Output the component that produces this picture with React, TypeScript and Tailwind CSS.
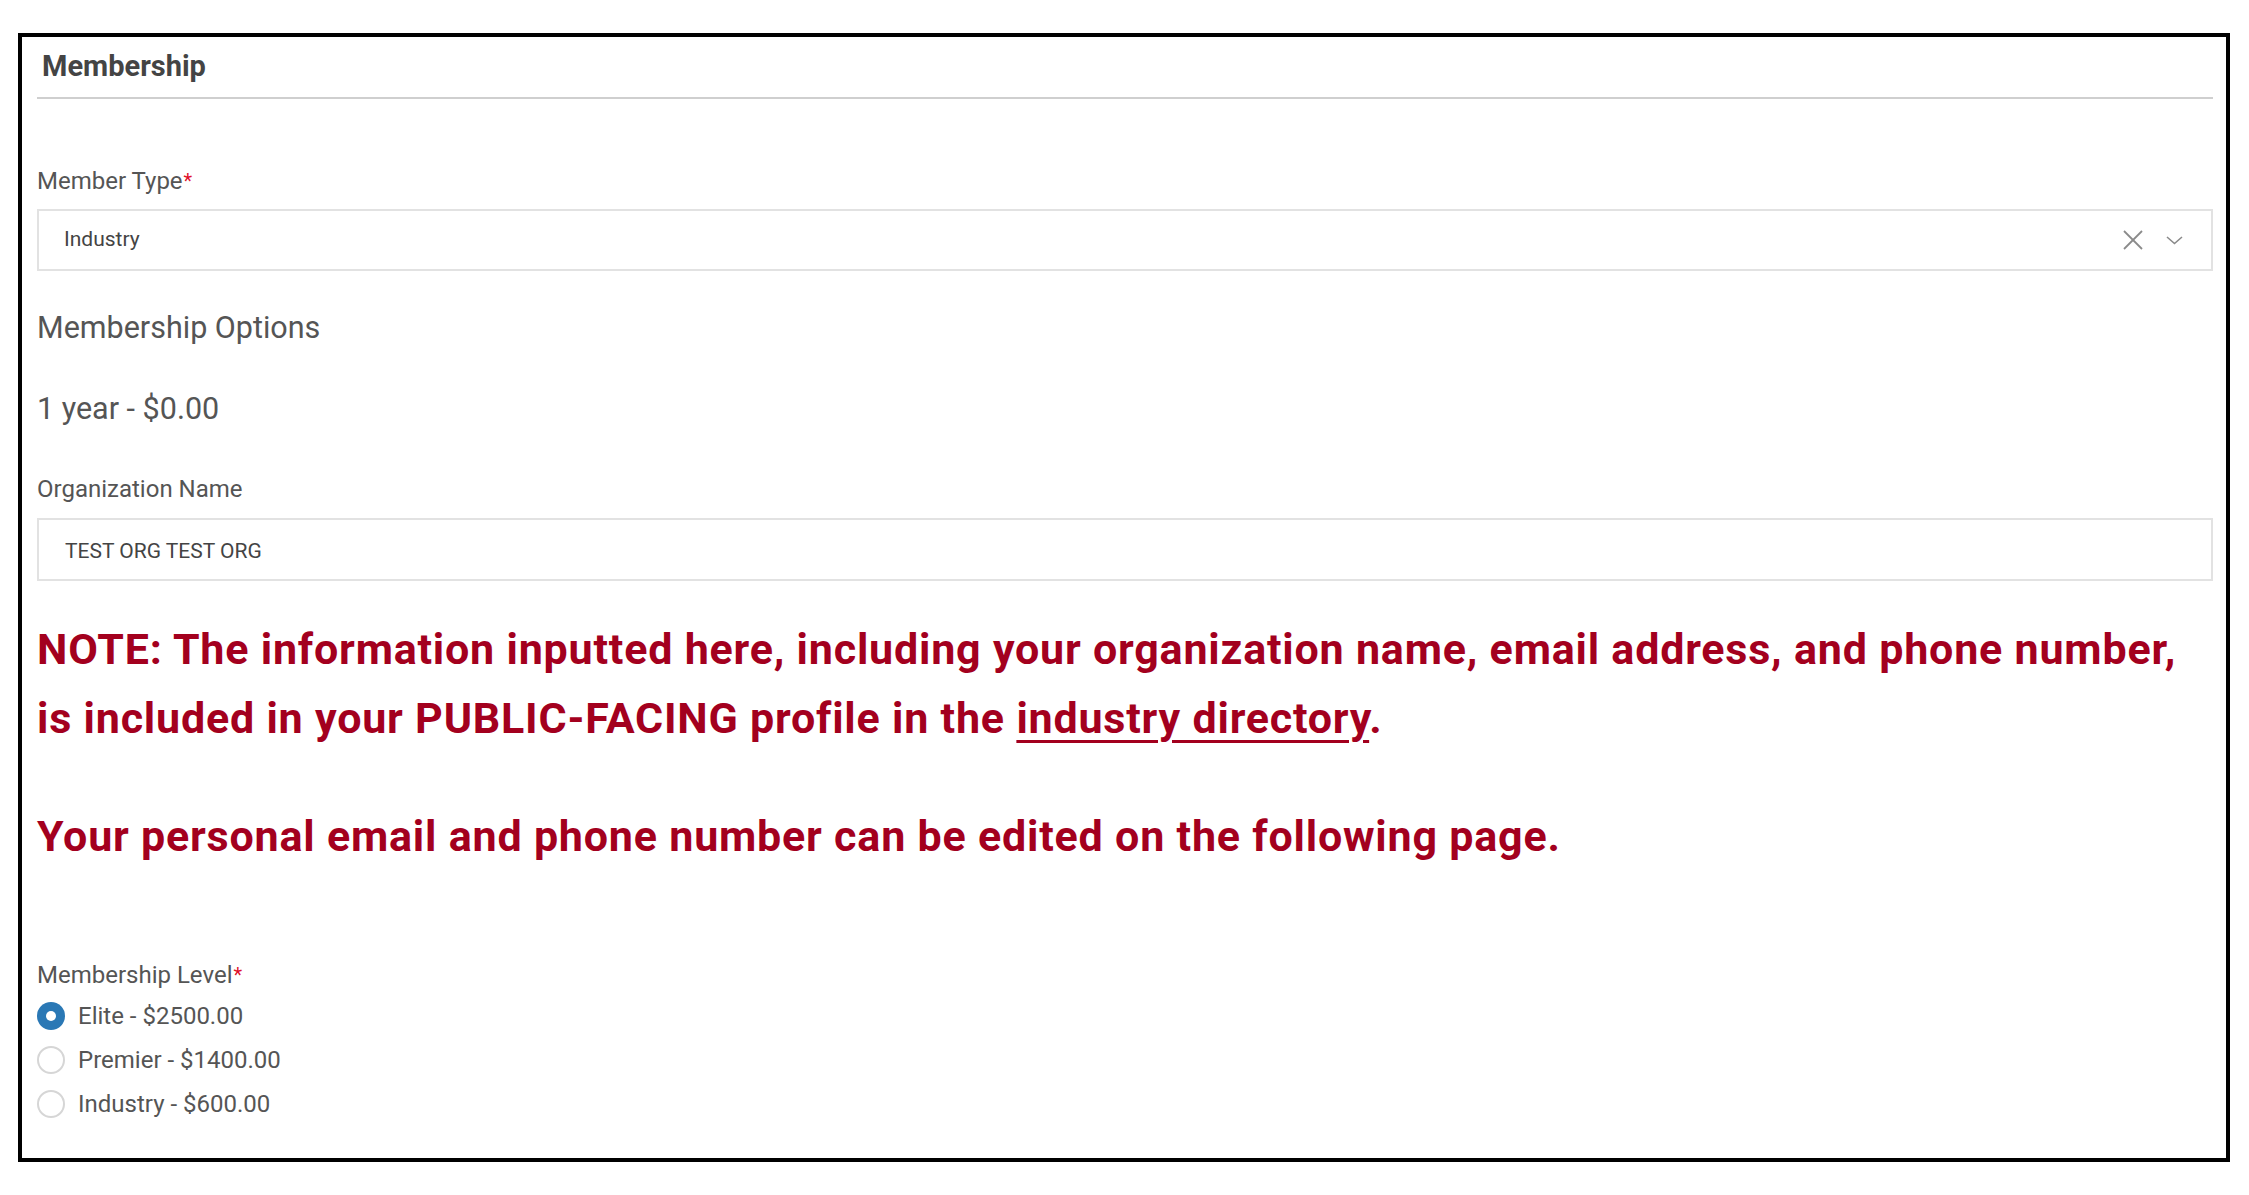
export default function App() {
  const levels = [
    { label: "Elite - $2500.00", checked: true },
    { label: "Premier - $1400.00", checked: false },
    { label: "Industry - $600.00", checked: false },
  ];

  return (
    <div className="min-h-screen bg-white pt-[33px] pl-[18px] font-['Roboto',sans-serif]">
      <div className="w-[2212px] h-[1129px] border-4 border-black bg-white pl-[15px] pr-[13px]">
        <h2 className="pt-[11px] pl-[5px] text-[29px] leading-[36px] font-bold text-[#444]">Membership</h2>
        <div className="mt-[13px] border-t-2 border-[#cfcfcf]" />

        <label className="mt-[68px] block text-[24px] leading-[28px] text-[#555]">
          Member Type<span className="text-[#e0102a] text-[20px] align-top ml-[1px]">*</span>
        </label>
        <div className="mt-[14px] h-[62px] border-2 border-[#e2e2e2] flex items-center justify-between pl-[25px] pr-[28px]">
          <span className="text-[21px] leading-[24px] text-[#444] pb-[3px]">Industry</span>
          <div className="flex items-center gap-[22px] text-[#8a8a8a]">
            <svg width="22" height="20" viewBox="0 0 22 20" fill="none" stroke="currentColor" strokeWidth="1.8">
              <line x1="2" y1="1" x2="20" y2="19" />
              <line x1="20" y1="1" x2="2" y2="19" />
            </svg>
            <svg width="17" height="9" viewBox="0 0 17 9" fill="none" stroke="currentColor" strokeWidth="1.6">
              <polyline points="1,1 8.5,7.5 16,1" />
            </svg>
          </div>
        </div>

        <p className="mt-[39px] text-[30.5px] leading-[36px] text-[#555]">Membership Options</p>
        <p className="mt-[45px] text-[30.5px] leading-[36px] text-[#555]">1 year - $0.00</p>

        <label className="mt-[48px] block text-[24px] leading-[28px] text-[#555]">Organization Name</label>
        <div className="mt-[15px] h-[63px] border-2 border-[#e2e2e2] flex items-center pl-[26px]">
          <span className="text-[21px] leading-[24px] text-[#444] pt-[2px]">TEST ORG TEST ORG</span>
        </div>

        <p className="mt-[34px] text-[43px] leading-[69px] tracking-[0.8px] font-bold text-[#a3001e]">
          NOTE: The information inputted here, including your organization name, email address, and phone number,
          <br />
          is included in your PUBLIC-FACING profile in the{" "}
          <a href="#" className="underline decoration-[3px] underline-offset-[7px]">
            industry directory
          </a>
          .
        </p>
        <p className="mt-[49px] text-[43px] leading-[69px] tracking-[0.8px] font-bold text-[#a3001e]">
          Your personal email and phone number can be edited on the following page.
        </p>

        <label className="mt-[90px] block text-[24px] leading-[28px] text-[#555]">
          Membership Level<span className="text-[#e0102a] text-[20px] align-top ml-[1px]">*</span>
        </label>
        <div className="mt-[13px] flex flex-col gap-[16px]">
          {levels.map((l) => (
            <div key={l.label} className="flex items-center gap-[13px] h-[28px]">
              {l.checked ? (
                <span className="w-[28px] h-[28px] rounded-full bg-[#2a78b5] flex items-center justify-center">
                  <span className="w-[10px] h-[10px] rounded-full bg-white" />
                </span>
              ) : (
                <span className="w-[28px] h-[28px] rounded-full border-2 border-[#d6d6d6] bg-white" />
              )}
              <span className="text-[24px] leading-[28px] text-[#555]">{l.label}</span>
            </div>
          ))}
        </div>
      </div>
    </div>
  );
}
